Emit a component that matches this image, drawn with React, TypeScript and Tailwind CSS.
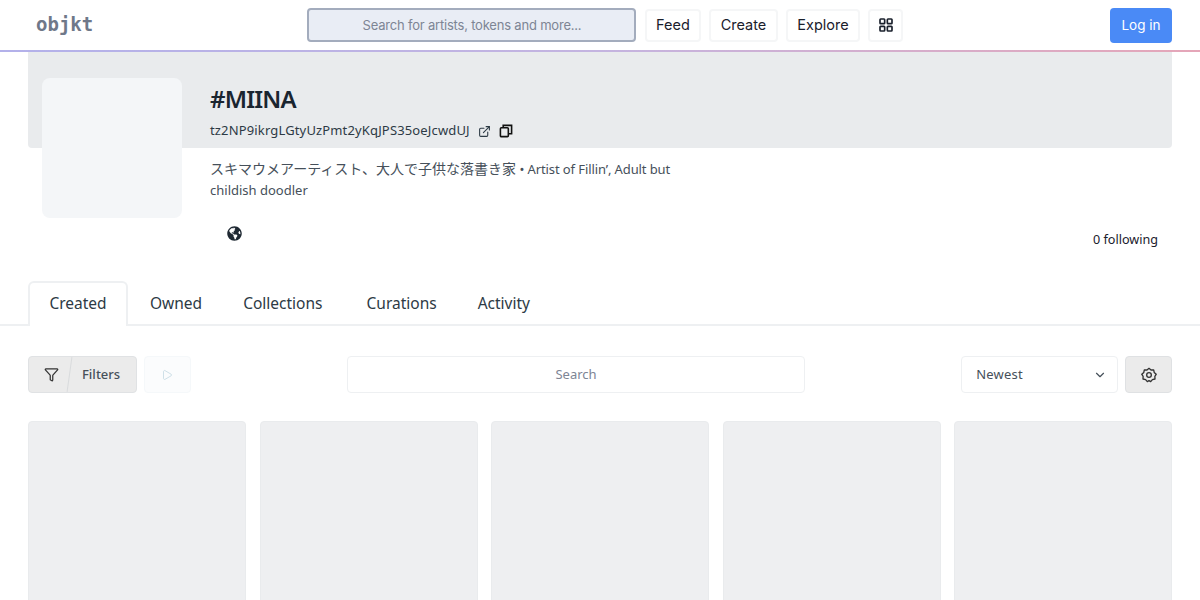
import React from 'react';
import { ExternalLink, Filter, Play, ChevronDown, LayoutGrid } from 'lucide-react';
import { FaGlobeAmericas } from 'react-icons/fa';

const plex = "font-['Noto_Sans','Noto_Sans_CJK_JP',sans-serif]";

function NavButton({ children, className = '' }: { children: React.ReactNode; className?: string }) {
  return (
    <button className={`h-[33px] rounded border-2 border-[#f5f6f7] bg-white text-[14.5px] text-[#1a202c] font-['Inter',sans-serif] flex items-center justify-center ${className}`}>
      {children}
    </button>
  );
}

export default function App() {
  const tabs = [
    { name: 'Owned', gap: 'ml-[22px]' },
    { name: 'Collections', gap: 'ml-[41px]' },
    { name: 'Curations', gap: 'ml-[44px]' },
    { name: 'Activity', gap: 'ml-[41px]' },
  ];

  return (
    <div className={`h-screen overflow-hidden bg-white ${plex}`}>
      {/* Header */}
      <header className="h-[50px] flex items-center pl-[36px] pr-[28px]">
        <span className="w-[271px] text-[19px] leading-none font-bold text-[#6f7889] font-['DejaVu_Sans_Mono','Liberation_Mono',monospace] -mt-[2px]">objkt</span>
        <div className="w-[329px] h-[34px] rounded border-2 border-[#a3acbd] bg-[#e9edf5] flex items-center justify-center pt-[1px] pl-[1px] text-[13px] tracking-[-0.2px] text-[#7d8594] font-['Inter',sans-serif]">
          Search for artists, tokens and more...
        </div>
        <NavButton className="ml-[9px] w-[56px]">Feed</NavButton>
        <NavButton className="ml-[8px] w-[69px]">Create</NavButton>
        <NavButton className="ml-[8px] w-[74px]">Explore</NavButton>
        <NavButton className="ml-[8px] w-[35px]"><LayoutGrid size={16} strokeWidth={2.5} /></NavButton>
        <button className="ml-auto w-[62px] h-[35px] rounded bg-[#4a8af6] text-white text-[13.5px] font-['Inter',sans-serif]">Log in</button>
      </header>
      <div className="h-[2px] bg-gradient-to-r from-[#b3b1ea] via-[#c4b4e0] to-[#e5a6b8]" />

      {/* Profile */}
      <section className="relative h-[228px] px-[28px]">
        <div className="h-[96px] bg-[#e9ebed] rounded-b" />
        <div className="absolute left-[42px] top-[26px] w-[140px] h-[140px] rounded-lg bg-[#f4f6f8]" />
        <div className="absolute left-[210px] top-[25px] w-[470px]">
          <h1 className="text-[24px] leading-[44px] font-semibold tracking-[-0.8px] text-[#1a2530]">#MIINA</h1>
          <div className="flex items-center h-[20px] text-[13px] tracking-[0.15px] text-[#2d3a45]">
            <span>tz2NP9ikrgLGtyUzPmt2yKqJPS35oeJcwdUJ</span>
            <ExternalLink size={13} className="ml-[8px]" />
            <svg className="ml-[8px]" width="14" height="14" viewBox="0 0 15 15" fill="none" stroke="#111" strokeWidth="1.7">
              <rect x="1.500" y="4" width="8.500" height="9.500" rx="1" />
              <path d="M4.500 4V1.500h9v9H10" />
            </svg>
          </div>
          <p className="mt-[17px] text-[13px] leading-[21px] text-[#46505a]">
            <span className="text-[14px]">スキマウメアーティスト、大人で子供な落書き家</span> <span className="tracking-[-0.1px]">• Artist of Fillin’, Adult but</span><br />childish doodler
          </p>
          <FaGlobeAmericas size={15} className="ml-[17px] mt-[25px] text-[#1f2933]" />
        </div>
        <div className="absolute right-[42px] top-[178px] text-[12.600px] leading-[20px] text-[#1a202c]">0 following</div>
      </section>

      {/* Tabs */}
      <nav className="h-[45px] mt-[1px] border-b-2 border-[#eef0f2] pl-[28px] flex items-start text-[15.500px] text-[#2d3a45]">
        <div className="w-[100px] h-[45px] rounded-t-md border-2 border-b-0 border-[#eef0f2] bg-white flex items-center justify-center pb-[2px]">Created</div>
        <div className="flex h-[45px] items-center">
          {tabs.map((t) => (
            <span key={t.name} className={t.gap}>{t.name}</span>
          ))}
        </div>
      </nav>

      {/* Toolbar */}
      <div className="mt-[30px] px-[28px] flex items-center h-[37px]">
        <div className="w-[109px] h-[37px] rounded border border-[#e0e2e4] bg-[#ebebeb] flex items-center relative">
          <Filter size={15} strokeWidth={2} className="ml-[15px] text-[#333]" />
          <span className="ml-[23px] text-[13px] font-medium text-[#46505a]">Filters</span>
          <span className="absolute left-[40px] top-0 h-full w-px bg-[#d9dbdd] rotate-[8deg]" />
        </div>
        <div className="ml-[7px] w-[47px] h-[37px] rounded border border-[#f5f8fa] bg-[#fbfcfd] flex items-center justify-center">
          <Play size={12} className="text-[#cfe0e8]" />
        </div>
        <div className="ml-[156px] w-[459px] h-[37px] rounded border border-[#eef0f2] bg-white flex items-center justify-center text-[13px] text-[#7d8594]">Search</div>
        <div className="ml-[156px] w-[157px] h-[37px] rounded border border-[#eef0f2] bg-white flex items-center justify-between pl-[14px] pr-[10px] text-[13px] tracking-[0.2px] text-[#46505a]">
          Newest
          <ChevronDown size={14} />
        </div>
        <div className="ml-[7px] w-[47px] h-[37px] rounded border border-[#dfe1e3] bg-[#ebebeb] flex items-center justify-center">
          <svg width="16" height="16" viewBox="0 0 24 24" fill="none" stroke="#333" strokeWidth="2" strokeLinejoin="round">
            <path d="M12 2l3 2.500 4-.3.800 3.900 3 2.900-2 3 .2 4-3.900.900L14.500 22 12 20.500 9.500 22l-2.600-3.100-3.900-.9.200-4-2-3 3-2.900L5 4.200l4 .300z" />
            <circle cx="12" cy="12" r="3.500" />
          </svg>
        </div>
      </div>

      {/* Loading cards */}
      <div className="mt-[28px] px-[28px] grid grid-cols-5 gap-x-[13.500px]">
        {[0, 1, 2, 3, 4].map((n) => (
          <div key={n} className="h-[300px] rounded border border-[#e9ebed] bg-[#eeeff1]" />
        ))}
      </div>
    </div>
  );
}
